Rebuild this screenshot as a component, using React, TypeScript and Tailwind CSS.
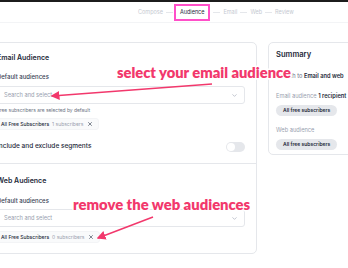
import { ChevronDown, X } from "lucide-react";

const steps = ["Compose", "Audience", "Email", "Web", "Review"];

function Chip({ count }: { count: number }) {
  return (
    <div className="mt-[4px] flex h-[12px] w-fit items-center gap-[3px] rounded-[3px] border border-gray-100 bg-gray-50 pl-[3px] pr-[5px] text-[5px] leading-none">
      <span className="font-medium text-gray-800">All Free Subscribers</span>
      <span className="text-gray-400">{count} subscribers</span>
      <X size={6} strokeWidth={2.5} className="ml-[1px] text-gray-700" />
    </div>
  );
}

function SearchBox() {
  return (
    <div className="flex h-[18px] items-center justify-between rounded-[3px] border border-gray-200 pl-[6px] pr-[6px]">
      <span className="text-[5.7px] text-gray-400">Search and select</span>
      <ChevronDown size={7} className="text-gray-400" />
    </div>
  );
}

function Annotation({ text, className }: { text: string; className: string }) {
  return (
    <p
      className={`absolute font-['Lato',sans-serif] font-extrabold leading-none text-[#f2386c] [paint-order:stroke_fill] [-webkit-text-stroke:3px_white] ${className}`}
    >
      {text}
    </p>
  );
}

export default function App() {
  return (
    <div className="relative h-[268px] w-[348px] overflow-hidden bg-white font-['Inter',sans-serif]">
      <div className="h-[2px] bg-[#1c1c1c]" />

      {/* Steps */}
      <header className="flex h-[21px] items-center border-b border-gray-100 pl-[138px] text-[5.5px] text-[#c5c9d1]">
        {steps.map((s, i) => (
          <div key={s} className="flex items-center">
            {i > 0 && <span className={`h-px w-[7px] bg-gray-200 ${i === 1 ? "ml-[3px] mr-[1px]" : "mx-[3px]"}`} />}
            {s === "Audience" ? (
              <span className="flex h-[17px] items-center border-2 border-[#ff4fc8] px-[4px] text-gray-800">{s}</span>
            ) : (
              <span>{s}</span>
            )}
          </div>
        ))}
      </header>

      <main className="ml-[-15px] mt-[19px] flex items-start gap-[11px]">
        {/* Audience card */}
        <section className="w-[272px] shrink-0 rounded-[5px] border border-gray-200">
          <div className="border-b border-gray-200 px-[11px] pb-[10px] pt-[10px]">
            <h2 className="text-[7px] font-semibold leading-[9px] text-gray-800">Email Audience</h2>
            <p className="mt-[11px] text-[6px] font-medium leading-[8px] text-gray-700">Default audiences</p>
            <div className="mt-[5px]">
              <SearchBox />
            </div>
            <p className="mt-[3px] text-[4.9px] leading-[7px] text-gray-500">Free subscribers are selected by default</p>
            <Chip count={1} />
            <div className="mt-[11px] flex h-[12px] items-center justify-between">
              <span className="text-[6.5px] font-medium text-gray-800">Include and exclude segments</span>
              <span className="flex h-[10px] w-[19px] items-center rounded-full bg-gray-200 px-[1px]">
                <span className="h-[8px] w-[8px] rounded-full bg-white" />
              </span>
            </div>
          </div>
          <div className="px-[11px] pb-[10px] pt-[12px]">
            <h2 className="text-[7px] font-semibold leading-[9px] text-gray-800">Web Audience</h2>
            <p className="mt-[12px] text-[6px] font-medium leading-[8px] text-gray-700">Default audiences</p>
            <div className="mt-[4px]">
              <SearchBox />
            </div>
            <div className="mt-[2px]">
              <Chip count={0} />
            </div>
          </div>
        </section>

        {/* Summary */}
        <aside className="w-[110px] shrink-0 rounded-[5px] border border-gray-200 px-[7px] pb-[4px] pt-[7px]">
          <h2 className="text-[7.6px] font-semibold leading-[10px] text-gray-800">Summary</h2>
          <p className="mt-[12px] whitespace-nowrap text-[5.7px] leading-[8px] text-gray-500">
            Publish to <span className="font-semibold text-gray-800">Email and web</span>
          </p>
          <p className="mt-[12px] whitespace-nowrap text-[5.7px] leading-[8px] text-gray-400">
            Email audience <span className="font-semibold text-gray-800">1 recipient</span>
          </p>
          <span className="mt-[5px] flex h-[11px] w-fit items-center rounded-full bg-gray-200 px-[7px] text-[5px] font-semibold text-gray-800">
            All free subscribers
          </span>
          <p className="mt-[10px] text-[5.7px] leading-[8px] text-gray-400">Web audience</p>
          <span className="mt-[5px] flex h-[11px] w-fit items-center rounded-full bg-gray-200 px-[7px] text-[5px] font-semibold text-gray-800">
            All free subscribers
          </span>
        </aside>
      </main>

      {/* Annotations */}
      <svg className="pointer-events-none absolute inset-0" width="348" height="268">
        <defs>
          <marker id="head" markerWidth="6" markerHeight="6" refX="5" refY="3" orient="auto">
            <path d="M0,0 L6,3 L0,6 z" fill="#f2386c" />
          </marker>
        </defs>
        <line x1="212" y1="84" x2="52" y2="96" stroke="#f2386c" strokeWidth="1.5" markerEnd="url(#head)" />
        <line x1="153" y1="217" x2="98" y2="238" stroke="#f2386c" strokeWidth="1.5" markerEnd="url(#head)" />
      </svg>
      <Annotation text="select your email audience" className="left-[117px] top-[65px] text-[14.7px]" />
      <Annotation text="remove the web audiences" className="left-[73px] top-[197px] text-[14.8px]" />
    </div>
  );
}
